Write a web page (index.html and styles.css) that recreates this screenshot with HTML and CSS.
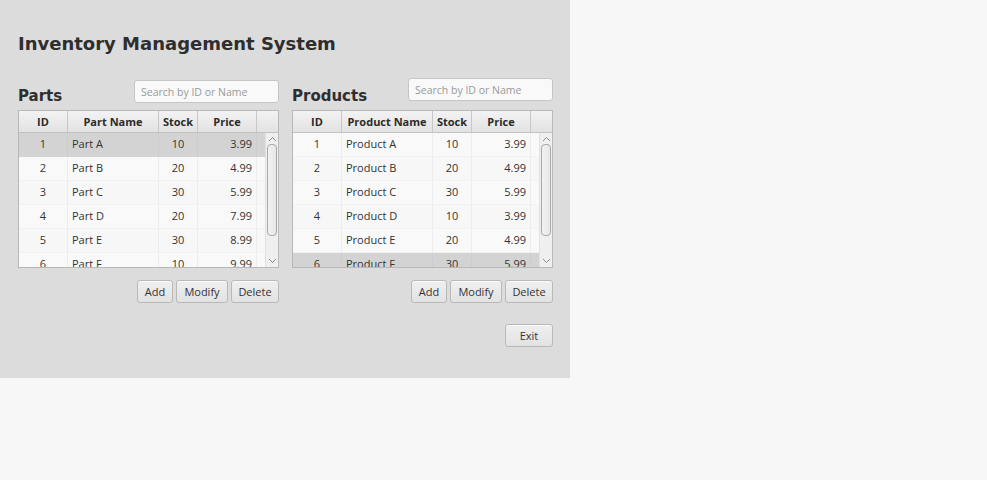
FILE: index.html
```html
<!DOCTYPE html>
<html>
<head>
<meta charset="utf-8">
<link rel="stylesheet" href="styles.css">
</head>
<body>
<div class="window">
  <h1 class="title">Inventory Management System</h1>
  <div class="panels">
    <section class="panel">
      <div class="panel-head">
        <h2 class="panel-title">Parts</h2>
        <input class="search" type="text" placeholder="Search by ID or Name">
      </div>
      <div class="table">
        <div class="thead">
          <div class="th c-id">ID</div>
          <div class="th c-name">Part Name</div>
          <div class="th c-stock">Stock</div>
          <div class="th c-price">Price</div>
          <div class="th c-fill"></div>
        </div>
        <div class="tbody">
          <div class="rows">
            <div class="tr selected"><div class="td c-id">1</div><div class="td c-name">Part A</div><div class="td c-stock">10</div><div class="td c-price">3.99</div></div>
            <div class="tr"><div class="td c-id">2</div><div class="td c-name">Part B</div><div class="td c-stock">20</div><div class="td c-price">4.99</div></div>
            <div class="tr odd"><div class="td c-id">3</div><div class="td c-name">Part C</div><div class="td c-stock">30</div><div class="td c-price">5.99</div></div>
            <div class="tr"><div class="td c-id">4</div><div class="td c-name">Part D</div><div class="td c-stock">20</div><div class="td c-price">7.99</div></div>
            <div class="tr odd"><div class="td c-id">5</div><div class="td c-name">Part E</div><div class="td c-stock">30</div><div class="td c-price">8.99</div></div>
            <div class="tr"><div class="td c-id">6</div><div class="td c-name">Part F</div><div class="td c-stock">10</div><div class="td c-price">9.99</div></div>
          </div>
          <div class="vscroll">
            <svg class="arrow" width="9" height="6" viewBox="0 0 9 6"><path d="M1 5 L4.5 1.5 L8 5" fill="none" stroke="#8a8a8a" stroke-width="1"/></svg>
            <div class="track"><div class="thumb"></div></div>
            <svg class="arrow" width="9" height="6" viewBox="0 0 9 6"><path d="M1 1 L4.5 4.5 L8 1" fill="none" stroke="#8a8a8a" stroke-width="1"/></svg>
          </div>
        </div>
      </div>
      <div class="actions">
        <button class="btn btn-add">Add</button>
        <button class="btn btn-modify">Modify</button>
        <button class="btn btn-delete">Delete</button>
      </div>
    </section>
    <section class="panel">
      <div class="panel-head">
        <h2 class="panel-title">Products</h2>
        <input class="search search-up" type="text" placeholder="Search by ID or Name">
      </div>
      <div class="table">
        <div class="thead">
          <div class="th c-id">ID</div>
          <div class="th c-name">Product Name</div>
          <div class="th c-stock">Stock</div>
          <div class="th c-price">Price</div>
          <div class="th c-fill"></div>
        </div>
        <div class="tbody">
          <div class="rows">
            <div class="tr"><div class="td c-id">1</div><div class="td c-name">Product A</div><div class="td c-stock">10</div><div class="td c-price">3.99</div></div>
            <div class="tr odd"><div class="td c-id">2</div><div class="td c-name">Product B</div><div class="td c-stock">20</div><div class="td c-price">4.99</div></div>
            <div class="tr"><div class="td c-id">3</div><div class="td c-name">Product C</div><div class="td c-stock">30</div><div class="td c-price">5.99</div></div>
            <div class="tr odd"><div class="td c-id">4</div><div class="td c-name">Product D</div><div class="td c-stock">10</div><div class="td c-price">3.99</div></div>
            <div class="tr"><div class="td c-id">5</div><div class="td c-name">Product E</div><div class="td c-stock">20</div><div class="td c-price">4.99</div></div>
            <div class="tr selected"><div class="td c-id">6</div><div class="td c-name">Product F</div><div class="td c-stock">30</div><div class="td c-price">5.99</div></div>
          </div>
          <div class="vscroll">
            <svg class="arrow" width="9" height="6" viewBox="0 0 9 6"><path d="M1 5 L4.5 1.5 L8 5" fill="none" stroke="#8a8a8a" stroke-width="1"/></svg>
            <div class="track"><div class="thumb"></div></div>
            <svg class="arrow" width="9" height="6" viewBox="0 0 9 6"><path d="M1 1 L4.5 4.5 L8 1" fill="none" stroke="#8a8a8a" stroke-width="1"/></svg>
          </div>
        </div>
      </div>
      <div class="actions">
        <button class="btn btn-add">Add</button>
        <button class="btn btn-modify">Modify</button>
        <button class="btn btn-delete">Delete</button>
      </div>
      <div class="actions exit-row">
        <button class="btn btn-exit">Exit</button>
      </div>
    </section>
  </div>
</div>
</body>
</html>
```

FILE: styles.css
```css
* { box-sizing: border-box; }
html, body { margin: 0; padding: 0; }
body {
  background: #f7f7f7;
  width: 987px;
  height: 480px;
  overflow: hidden;
  font-family: "Open Sans", "Noto Sans", sans-serif;
  color: #333;
}
.window {
  width: 570px;
  height: 378px;
  background: #dcdcdc;
  padding: 32px 16px 0 18px;
}
.title {
  margin: 0;
  font-family: "DejaVu Sans", Verdana, sans-serif;
  font-weight: bold;
  font-size: 18px;
  line-height: 24px;
  color: #2e2e2e;
}
.panels {
  display: flex;
  gap: 13px;
  margin-top: 22px;
}
.panel {
  width: 261px;
  flex: none;
  display: flex;
  flex-direction: column;
}
.panel-head {
  display: flex;
  justify-content: space-between;
  align-items: flex-end;
  height: 26px;
  margin-bottom: 6px;
}
.panel-title {
  margin: 0;
  font-family: "DejaVu Sans", Verdana, sans-serif;
  font-weight: bold;
  font-size: 15px;
  line-height: 18px;
  color: #2e2e2e;
  position: relative;
  top: 1px;
}
.search {
  width: 145px;
  height: 23px;
  border: 1px solid #c6c6c6;
  border-radius: 3px;
  background: #f9f9f9;
  font-family: "Open Sans", "Noto Sans", sans-serif;
  font-size: 10.5px;
  padding: 0 6px;
  margin: 0 0 1px 0;
  color: #333;
  outline: none;
}
.search-up { margin-bottom: 3px; }
.search::placeholder { color: #9a9a9a; }
.table {
  height: 158px;
  border: 1px solid #b8b8b8;
  background: #f8f8f8;
  display: flex;
  flex-direction: column;
  overflow: hidden;
}
.thead {
  display: flex;
  height: 22px;
  flex: none;
  border-bottom: 1px solid #c2c2c2;
}
.th {
  height: 21px;
  background: linear-gradient(#f3f3f3, #e2e2e2);
  border-right: 1px solid #c8c8c8;
  font-weight: bold;
  font-size: 11px;
  line-height: 21px;
  text-align: center;
  color: #2b2b2b;
}
.c-id { width: 49px; }
.c-name { width: 91px; }
.c-stock { width: 39px; }
.c-price { width: 59px; }
.c-fill { flex: 1; border-right: none; }
.tbody {
  flex: 1;
  display: flex;
  overflow: hidden;
}
.rows {
  flex: 1;
  overflow: hidden;
}
.tr {
  display: flex;
  height: 24px;
  background: #f9f9f9;
  border-bottom: 1px solid #f1f1f1;
}
.tr.odd { background: #f7f7f7; }
.tr.selected { background: #d3d3d3; border-bottom-color: #d3d3d3; }
.td {
  height: 23px;
  line-height: 22px;
  font-size: 11px;
  color: #333;
  border-right: 1px solid #ececec;
}
.tr.selected .td { border-right-color: #cdcdcd; }
.td.c-id { text-align: center; }
.td.c-name { padding-left: 4px; }
.td.c-stock { text-align: center; }
.td.c-price { text-align: right; padding-right: 4px; }
.vscroll {
  width: 13px;
  flex: none;
  background: #efefef;
  border-left: 1px solid #e2e2e2;
  display: flex;
  flex-direction: column;
  align-items: center;
  padding: 3px 0 3px 0;
}
.arrow { flex: none; display: block; }
.track {
  flex: 1;
  width: 100%;
  padding: 2px 1px 22px 1px;
}
.thumb {
  height: 100%;
  border: 1px solid #a9a9a9;
  border-radius: 4px;
  background: linear-gradient(90deg, #f2f2f2, #e6e6e6);
}
.actions {
  display: flex;
  justify-content: flex-end;
  gap: 3px;
  margin-top: 12px;
}
.btn {
  height: 23px;
  padding: 0;
  border: 1px solid #b9b9b9;
  border-radius: 3px;
  background: linear-gradient(#f0f0f0, #e2e2e2);
  font-family: "Open Sans", "Noto Sans", sans-serif;
  font-size: 11px;
  color: #333;
  line-height: 21px;
  box-shadow: inset 0 1px 0 #fafafa;
}
.btn-add { width: 36px; }
.btn-modify { width: 52px; }
.btn-delete { width: 48px; }
.btn-exit { width: 48px; }
.exit-row { margin-top: 21px; }
```
